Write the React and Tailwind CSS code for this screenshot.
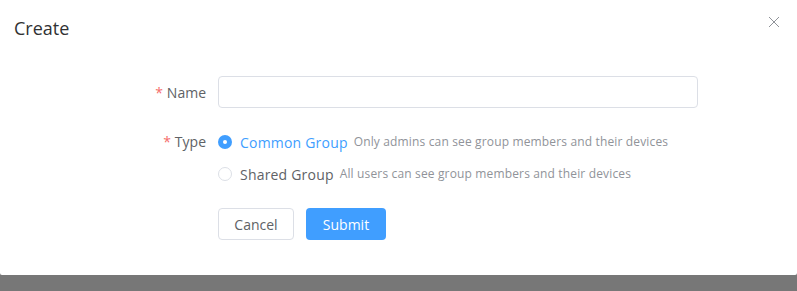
import React, { useState } from "react";

const font = { fontFamily: '"Open Sans", "Noto Sans", sans-serif' };

const Radio = ({ checked, label, hint, onClick }) => (
    <label onClick={onClick} className="flex h-8 cursor-pointer items-center">
        {checked ? (
            <span className="flex h-[14px] w-[14px] items-center justify-center rounded-full bg-[#409eff]">
                <span className="h-1 w-1 rounded-full bg-white" />
            </span>
        ) : (
            <span className="h-[14px] w-[14px] rounded-full border border-[#dcdfe6] bg-white" />
        )}
        <span className={`ml-2 text-[14px] tracking-[0.2px] ${checked ? "text-[#409eff]" : "text-[#606266]"}`}>{label}</span>
        <span className="ml-[6px] text-[12px] tracking-[0.15px] text-[#909399]">{hint}</span>
    </label>
);

const App = () => {
    const [type, setType] = useState("common");

    return (
        <div className="flex h-[291px] w-[797px] flex-col bg-[#777777]" style={font}>
            <div className="relative h-[275px] rounded-b-[2px] bg-white">
                {/* Header */}
                <div className="px-[14px] pt-[16px]">
                    <span className="text-[18px] leading-6 text-[#303133]">Create</span>
                </div>
                <button className="absolute right-[15px] top-[14px] p-[2px] text-[#909399]">
                    <svg width="12" height="12" viewBox="0 0 12 12" fill="none" stroke="currentColor" strokeWidth="1">
                        <path d="M1 1l10 10M11 1L1 11" />
                    </svg>
                </button>

                {/* Form */}
                <div className="pl-[118px] pt-[35px]">
                    <div className="mb-[18px] flex items-center">
                        <div className="w-[100px] pr-3 text-right text-[14px] text-[#606266]">
                            <span className="mr-1 text-[#f56c6c]">*</span>Name
                        </div>
                        <input className="h-8 w-[480px] rounded border border-[#dcdfe6] px-[15px] text-[14px] text-[#606266] outline-none" />
                    </div>

                    <div className="mb-[18px] flex items-start">
                        <div className="w-[100px] pr-3 text-right text-[14px] leading-8 text-[#606266]">
                            <span className="mr-1 text-[#f56c6c]">*</span>Type
                        </div>
                        <div className="flex flex-col">
                            <Radio
                                checked={type === "common"}
                                label="Common Group"
                                hint="Only admins can see group members and their devices"
                                onClick={() => setType("common")}
                            />
                            <Radio
                                checked={type === "shared"}
                                label="Shared Group"
                                hint="All users can see group members and their devices"
                                onClick={() => setType("shared")}
                            />
                        </div>
                    </div>

                    <div className="flex gap-3 pl-[100px]">
                        <button className="h-8 w-[76px] rounded border border-[#dcdfe6] bg-white text-[14px] text-[#606266]">Cancel</button>
                        <button className="h-8 w-[80px] rounded bg-[#409eff] text-[14px] text-white">Submit</button>
                    </div>
                </div>
            </div>
        </div>
    );
};

export default App;
